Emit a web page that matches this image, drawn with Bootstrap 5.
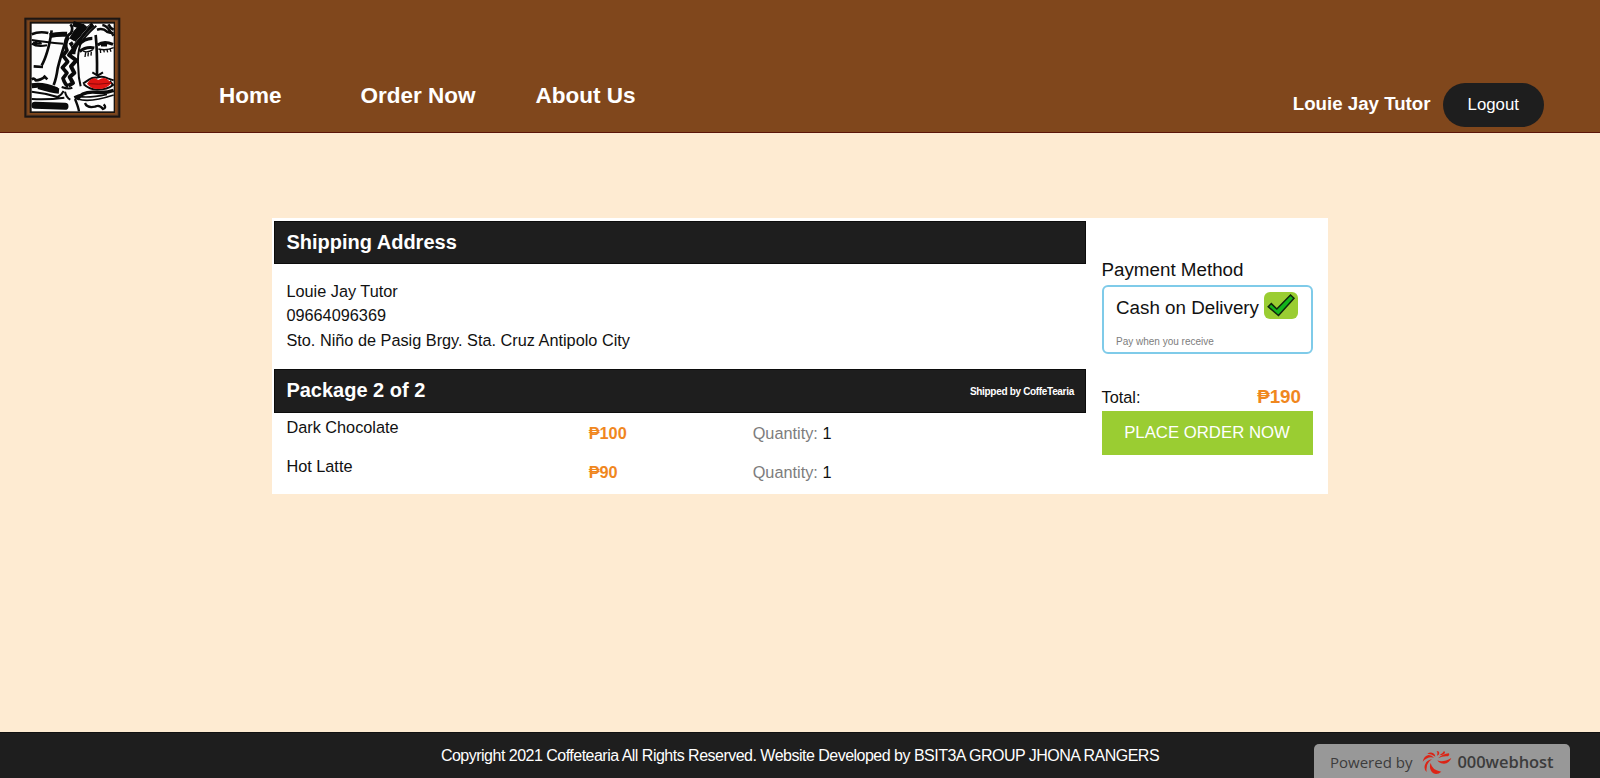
<!DOCTYPE html>
<html lang="en">
<head>
<meta charset="utf-8">
<meta name="viewport" content="width=device-width, initial-scale=1">
<title>Coffetearia - Checkout</title>
<link href="https://cdn.jsdelivr.net/npm/bootstrap@5.3.0/dist/css/bootstrap.min.css" rel="stylesheet">
<style>
body{font-family:"Liberation Sans",Arial,sans-serif;font-size:16.3px;line-height:24.4px;background:#feebd2;color:#111;height:778px;overflow:hidden}
a{text-decoration:none}
.site-head{height:133px;background:#80471c;border-bottom:1px solid #5a1508}
.brand-mark{width:97px;height:101px;margin:17px 0 0 24px}
.main-menu{display:grid;grid-template-columns:141.5px 175px auto;margin:82.5px 0 0 98px;font-size:22.5px;line-height:26px;font-weight:700}
.main-menu a,.user-name{color:#fff}
.user-area{margin:83px 56px 0 auto;line-height:44px}
.user-name{font-size:18.7px;font-weight:700;line-height:42px}
.logout-btn{width:101.5px;height:44px;border-radius:22px;background:#1e1e1e;color:#fff;font-size:16.8px;line-height:44px;padding:0;border:0}
.order-wrap{width:1056px;height:276px;margin:85px auto 0;background:#fff;padding:2.5px 15.5px 0 2.4px}
.order-main{width:812px}
.bar{background:#1e1e1e;border:1px solid #0c0c0c;color:#fff;height:43px;padding:0 11.5px 0 11px}
.bar h2{font-size:20px;line-height:41px;font-weight:700;margin:0}
.bar-2{height:44px}
.bar-2 h2{line-height:40px;padding-bottom:2px}
.shipper{font-size:10px;font-weight:700;letter-spacing:-.32px;line-height:14px;padding-top:2px}
.address{height:105.5px;padding:15.5px 12px 0}
.item-row{display:grid;grid-template-columns:302.3px 164px auto;height:39.2px;padding:2px 12px 0}
.item-row>*{padding-top:6px}
.item-row>:first-child{padding-top:0}
.price{color:#f0871e;font-weight:700}
.muted{color:#7d7d7d}
.pay-side{width:211px;padding-top:36.5px}
.pay-title{font-size:18.8px;line-height:26px;height:28px}
.pay-box{height:69px;border:2.5px solid #7fcbe9;border-radius:6px;padding:4.5px 13px 0 12.5px}
.pay-box .method{font-size:18.8px;line-height:31px;height:31px;white-space:nowrap}
.tick{width:34px;height:27px;border-radius:6px;background:#9acd32;display:block}
.hint{font-size:10px;line-height:14px;color:#7d7d7d;margin-top:12px}
.total{margin-top:30px;height:26.5px;line-height:26px;padding-right:11.5px}
.total .price{font-size:18.8px;line-height:25px}
.order-btn{height:44px;border:0;border-radius:0;background:#9acd32;color:#fff;font-size:16.75px;line-height:44px;padding:0;width:100%}
.site-foot{height:46px;background:#1e1e1e;border-top:1px solid #111;color:#fff;font-size:16px;line-height:45px;position:relative}
.copy{white-space:nowrap;letter-spacing:-.51px}
.host-badge{position:absolute;right:30px;bottom:0;width:256px;height:34px;background:#989898;border-radius:5px 5px 0 0;color:#3c3c3c;font:15px/34px "Open Sans",sans-serif;padding:2px 15px 0 16px;white-space:nowrap}
.host-logo{margin-left:10px}
.host-name{font-size:16.5px;font-weight:600;margin-left:5px;letter-spacing:-.05px}
</style>
</head>
<body class="d-flex flex-column">
<header class="site-head d-flex align-items-start flex-shrink-0">
  <a href="#" class="d-block lh-1"><svg class="brand-mark d-block" viewBox="27 28 291 303">
    <rect x="28" y="30" width="288" height="300" fill="#1d1613"/>
    <rect x="34" y="36" width="276" height="288" fill="#5d3a22"/>
    <rect x="37" y="39" width="270" height="282" fill="#80471c"/>
    <rect x="44" y="42" width="256" height="274" fill="#17120f"/>
    <rect x="50" y="48" width="246" height="263" fill="#fdfdfd"/>
    <g fill="none" stroke="#0b0b0b" stroke-width="7" stroke-linecap="butt" stroke-linejoin="round">
      <path d="M50 80Q72 70 100 76" stroke-width="8"/><path d="M104 84Q130 78 156 80" stroke-width="15"/>
      <path d="M50 97Q90 104 145 108M50 108Q66 119 96 113M62 98L64 112" stroke-width="6"/><path d="M54 104Q66 110 80 106" stroke-width="8"/>
      <path d="M110 68Q104 110 96 134Q88 160 80 173M56 176L84 178" stroke-width="8"/>
      <path d="M50 215Q58 210 62 218Q76 218 92 206M86 204L97 215" stroke-width="8"/>
      <path d="M50 234Q86 228 126 246" stroke-width="15"/><path d="M70 236Q110 248 132 250" stroke-width="16"/>
      <path d="M50 252Q90 256 128 268Q140 262 146 250M50 274Q100 277 148 270" stroke-width="6"/>
      <path d="M60 293L150 296" stroke-width="21" stroke-linecap="round"/>
      <path d="M166 50Q176 60 168 76Q152 86 150 106Q136 150 128 182Q124 212 116 232" stroke-width="8"/>
      <path d="M160 88Q146 110 156 128L144 144L158 162L142 180L156 196L144 212Q150 232 160 236" stroke-width="11"/>
      <path d="M166 104L178 122L162 142L184 158L168 176L178 196L164 208L174 226L160 234" stroke-width="12"/>
      <path d="M140 238Q162 246 172 240M150 252Q154 270 166 276" stroke-width="6"/>
      <path d="M174 48L200 56L182 76L170 96" stroke-width="17"/>
      <path d="M234 50Q205 74 188 104Q174 124 174 140M210 52L176 98" stroke-width="14"/>
      <path d="M226 52L172 116" stroke="#fdfdfd" stroke-width="3"/>
      <path d="M232 48L170 122M244 54Q206 88 196 110Q186 140 190 182Q190 210 197 236" stroke-width="6"/>
      <path d="M190 112Q208 92 232 92" stroke-width="10"/><path d="M242 82Q247 130 246 202" stroke-width="8"/>
      <path d="M194 132Q212 116 238 121" stroke-width="9"/><path d="M204 130Q216 137 234 126M212 134L210 148M220 134L219 146M229 132L228 144" stroke-width="4"/>
      <path d="M248 112Q266 98 294 110" stroke-width="9"/><path d="M250 124Q274 130 296 120M256 127L257 136M266 127L268 134M276 126L278 134M285 124L288 132" stroke-width="4"/><path d="M258 112L276 112" stroke-width="9"/>
      <path d="M246 66Q264 60 276 72Q286 76 296 76M262 52Q276 54 286 72Q292 78 296 84" stroke-width="8"/><path d="M280 50Q286 62 296 66" stroke-width="8"/>
      <path d="M232 194L248 204L264 194M204 228L222 216Q234 208 246 210Q262 204 278 212L296 218M206 230Q224 246 246 246Q278 246 294 232L284 220" stroke-width="6"/>
      <path d="M186 276Q200 250 244 254Q276 256 296 248M178 270Q192 264 200 262" stroke-width="10"/>
      <path d="M188 274Q224 286 296 262M190 266Q220 272 276 260" stroke-width="5"/>
      <path d="M180 274Q190 298 192 311M210 286Q216 302 240 297Q254 290 264 304Q276 300 266 290" stroke-width="7"/>
    </g>
    <path d="M216 228Q226 212 240 212L250 217Q266 206 276 214L290 226Q272 246 248 244Q228 244 216 228Z" fill="#df1512"/>
    <path d="M222 228Q248 232 286 226" stroke="#8d0707" stroke-width="3" fill="none"/>
  </svg></a>
  <nav class="main-menu"><a href="#">Home</a><a href="#">Order Now</a><a href="#">About Us</a></nav>
  <div class="user-area d-flex"><span class="user-name me-2 pe-1">Louie Jay Tutor</span><button class="btn logout-btn">Logout</button></div>
</header>

<main class="flex-grow-1">
  <section class="order-wrap d-flex justify-content-between">
    <div class="order-main">
      <div class="bar d-flex"><h2>Shipping Address</h2></div>
      <div class="address"><div>Louie Jay Tutor</div><div>09664096369</div><div>Sto. Niño de Pasig Brgy. Sta. Cruz Antipolo City</div></div>
      <div class="bar bar-2 d-flex justify-content-between align-items-center"><h2>Package 2 of 2</h2><span class="shipper">Shipped by CoffeTearia</span></div>
      <div class="item-row"><span>Dark Chocolate</span><span class="price">₱100</span><span><span class="muted">Quantity:</span> 1</span></div>
      <div class="item-row"><span>Hot Latte</span><span class="price">₱90</span><span><span class="muted">Quantity:</span> 1</span></div>
    </div>
    <aside class="pay-side">
      <div class="pay-title">Payment Method</div>
      <div class="pay-box">
        <div class="method d-flex justify-content-between"><span>Cash on Delivery</span>
          <svg class="tick" viewBox="0 0 34 27"><path d="M4.2 14.8L7.3 11.6L12.8 17L26.5 3L30 6.3L14.5 23.5Z" fill="#13b51b" stroke="#10240c" stroke-width="1.5"/></svg></div>
        <div class="hint">Pay when you receive</div>
      </div>
      <div class="total d-flex justify-content-between"><span>Total:</span><span class="price">₱190</span></div>
      <button class="btn order-btn">PLACE ORDER NOW</button>
    </aside>
  </section>
</main>

<footer class="site-foot text-center flex-shrink-0">
  <span class="copy">Copyright 2021 Coffetearia All Rights Reserved. Website Developed by BSIT3A GROUP JHONA RANGERS</span>
  <a class="host-badge d-flex align-items-center" href="#"><span>Powered by</span>
    <svg width="30" height="25" viewBox="368 73 90 75" class="host-logo"><g fill="#dc2416">
      <path d="M416 98Q430 84 449 83Q452 89 446 92Q430 90 416 98Z"/><path d="M414 104Q430 112 456 97Q450 113 434 114Q420 114 414 104Z"/><path d="M394 112Q398 134 426 138Q414 149 402 143Q387 130 394 112Z"/>
      <path d="M398 101Q378 112 382 139Q374 134 376 120Q381 103 398 101Z"/><path d="M404 96Q386 90 370 108Q374 90 388 88Q398 88 404 96Z"/><path d="M408 93Q396 84 384 84Q394 77 402 83Q408 87 408 93Z"/><path d="M413 90Q417 82 412 76Q420 76 420 82Q420 88 413 90Z"/><path d="M420 89Q430 84 434 76Q440 80 434 85Q428 89 420 89Z"/>
    </g></svg>
    <span class="host-name">000webhost</span></a>
</footer>
<script src="https://cdn.jsdelivr.net/npm/bootstrap@5.3.0/dist/js/bootstrap.bundle.min.js"></script>
</body>
</html>
